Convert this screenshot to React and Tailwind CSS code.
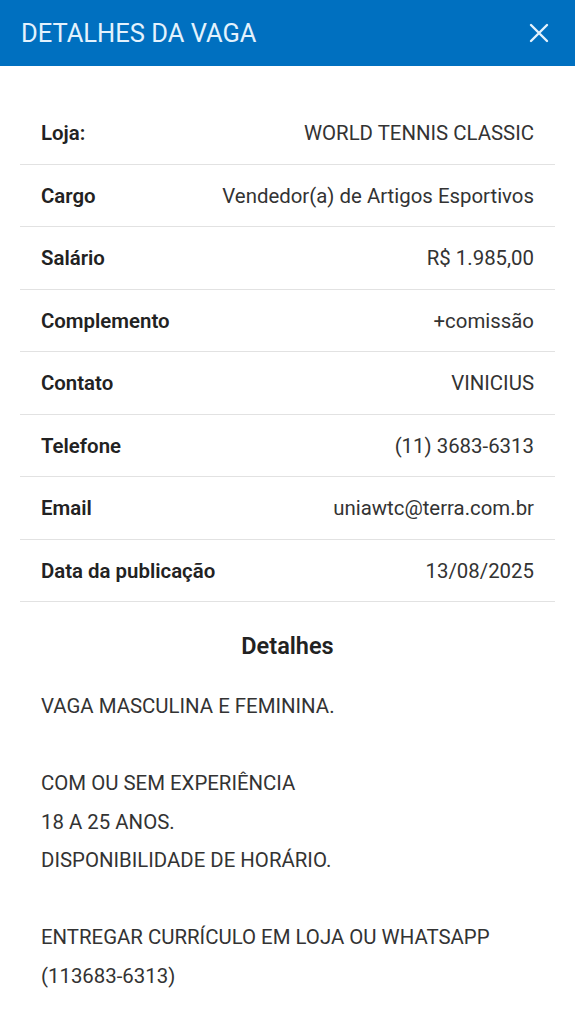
const rows = [
  ['Loja:', 'WORLD TENNIS CLASSIC'],
  ['Cargo', 'Vendedor(a) de Artigos Esportivos'],
  ['Salário', 'R$ 1.985,00'],
  ['Complemento', '+comissão'],
  ['Contato', 'VINICIUS'],
  ['Telefone', '(11) 3683-6313'],
  ['Email', 'uniawtc@terra.com.br'],
  ['Data da publicação', '13/08/2025'],
]

const details = `VAGA MASCULINA E FEMININA.

COM OU SEM EXPERIÊNCIA
18 A 25 ANOS.
DISPONIBILIDADE DE HORÁRIO.

ENTREGAR CURRÍCULO EM LOJA OU WHATSAPP
(113683-6313)`

export default function App() {
  return (
    <div className="min-h-screen bg-white font-['Roboto',sans-serif]">
      <header className="flex h-[66px] items-center justify-between bg-[#0070c0] pl-[21px] pr-[26px]">
        <h1 className="text-[25.5px] font-normal text-[#e3f2fd]">DETALHES DA VAGA</h1>
        <button type="button" className="text-[#e3f2fd]">
          <svg width="20" height="20" viewBox="0 0 20 20" fill="none" stroke="currentColor" strokeWidth="2.4" strokeLinecap="round">
            <path d="M2 2L18 18M18 2L2 18" />
          </svg>
        </button>
      </header>

      <div className="px-[20px] pt-[36px]">
        {rows.map(([label, value]) => (
          <div
            key={label}
            className="flex h-[62.5px] items-center justify-between border-b border-[#e2e2e2] px-[21px] pt-[2px] text-[20.4px]"
          >
            <span className="font-semibold text-[#222]">{label}</span>
            <span className="text-[#333]">{value}</span>
          </div>
        ))}

        <h2 className="mt-[27px] text-center text-[23.5px] font-semibold text-[#222]">Detalhes</h2>

        <p className="mt-[23px] whitespace-pre-line px-[21px] text-[20.4px] leading-[38.5px] text-[#333]">
          {details}
        </p>
      </div>
    </div>
  )
}
